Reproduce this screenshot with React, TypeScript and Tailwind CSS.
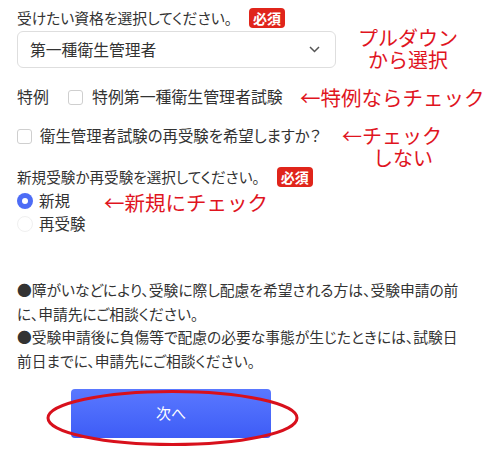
import React from "react";

const FONT = "[font-family:'Noto_Sans_CJK_JP','Noto_Sans',sans-serif]";

function Badge() {
  return (
    <span className="inline-flex h-[20px] w-[36px] items-center justify-center rounded-[4px] bg-[#e0251b] text-[14px] font-bold leading-none text-white">
      必須
    </span>
  );
}

function Checkbox() {
  return <span className="inline-block h-[15px] w-[15px] rounded-[3px] border border-[#cfcfcf] bg-white" />;
}

export default function App() {
  return (
    <div className={`relative h-[457px] w-[494px] overflow-hidden bg-white pl-[17px] text-[#333] ${FONT}`}>
      <div className="flex flex-col [font-feature-settings:'palt']">
        <div className="mt-[8px] flex h-[20px] items-center text-[14.8px]">
          <span>受けたい資格を選択してください。</span>
          <span className="ml-[17px]">
            <Badge />
          </span>
        </div>
        <div className="mt-[3px] flex h-[37px] w-[319px] items-center justify-between rounded-[6px] border border-[#dedede] pl-[12px] pr-[15px] text-[15.8px]">
          <span>第一種衛生管理者</span>
          <svg width="11" height="7" viewBox="0 0 11 7" fill="none">
            <path d="M1 1l4.5 4.5L10 1" stroke="#555" strokeWidth="1.5" />
          </svg>
        </div>
        <div className="mt-[19px] flex h-[20px] items-center text-[15.9px]">
          <span className="w-[51px]">特例</span>
          <Checkbox />
          <span className="ml-[9px]">特例第一種衛生管理者試験</span>
        </div>
        <div className="mt-[19px] flex h-[20px] items-center text-[15.4px]">
          <Checkbox />
          <span className="ml-[8px]">衛生管理者試験の再受験を希望しますか？</span>
        </div>
        <div className="mt-[21px] flex h-[20px] items-center text-[14.6px]">
          <span>新規受験か再受験を選択してください。</span>
          <span className="ml-[17px]">
            <Badge />
          </span>
        </div>
        <div className="mt-[4px] flex h-[20px] items-center text-[15.5px]">
          <span className="flex h-[16px] w-[16px] items-center justify-center rounded-full bg-[#4d6cf6]">
            <span className="h-[6px] w-[6px] rounded-full bg-white" />
          </span>
          <span className="ml-[6px]">新規</span>
        </div>
        <div className="mt-[3px] flex h-[20px] items-center text-[15.5px]">
          <span className="h-[16px] w-[16px] rounded-full border border-[#f0f0f0] bg-white" />
          <span className="ml-[6px]">再受験</span>
        </div>
        <div className="mt-[44px] whitespace-nowrap text-[14.75px] leading-[23.5px]">
          <div>●障がいなどにより、受験に際し配慮を希望される方は、受験申請の前</div>
          <div>に、申請先にご相談ください。</div>
          <div>●受験申請後に負傷等で配慮の必要な事態が生じたときには、試験日</div>
          <div>前日までに、申請先にご相談ください。</div>
        </div>
        <div className="ml-[54px] mt-[17px] flex h-[49px] w-[200px] items-center justify-center rounded-[4px] bg-gradient-to-b from-[#5a78ff] to-[#3e5cf6] text-[15px] text-white">
          次へ
        </div>
      </div>

      <div className="absolute left-[358px] top-[27px] text-center text-[20px] leading-[22px] text-[#e0141e]">
        <div>プルダウン</div>
        <div>から選択</div>
      </div>
      <div className="absolute left-[300px] top-[86px] whitespace-nowrap text-[20.5px] leading-[22px] text-[#e0141e]">
        ←特例ならチェック
      </div>
      <div className="absolute left-[342px] top-[125px] whitespace-nowrap text-[20px] leading-[22px] text-[#e0141e]">
        <div>←チェック</div>
        <div className="pl-[31px]">しない</div>
      </div>
      <div className="absolute left-[104px] top-[191px] whitespace-nowrap text-[20.5px] leading-[22px] text-[#e0141e]">
        ←新規にチェック
      </div>

      <svg className="absolute left-[45px] top-[388px]" width="255" height="60" viewBox="0 0 255 60">
        <ellipse cx="127.5" cy="30" rx="124.5" ry="26.5" fill="none" stroke="#d8101c" strokeWidth="3" />
      </svg>
    </div>
  );
}
